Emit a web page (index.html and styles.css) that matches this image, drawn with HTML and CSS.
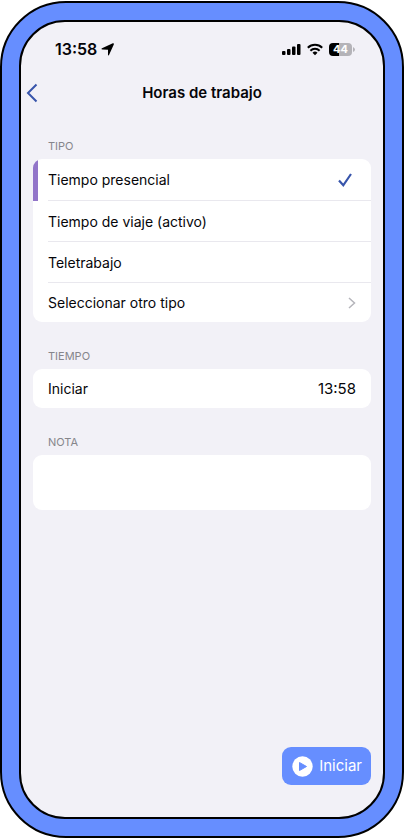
FILE: index.html
```html
<!DOCTYPE html>
<html lang="es">
<head>
<meta charset="utf-8">
<meta name="viewport" content="width=device-width, initial-scale=1">
<title>Horas de trabajo</title>
<link rel="stylesheet" href="styles.css">
</head>
<body>
<div class="device">
  <div class="screen">
    <div class="status">
      <div class="status-group clock">
        <span>13:58</span>
        <svg width="13" height="13" viewBox="0 0 13 13" aria-hidden="true"><path d="M12.800 1.400 8 12Q7.300 13.200 7 11.800V6.700L1.500 6.600Q-.5 6.300 1 5.200L11.800.3Q13.200 0 12.800 1.400Z"/></svg>
      </div>
      <div class="status-group">
        <svg width="19" height="13" viewBox="0 0 19 13" aria-hidden="true"><rect x="0" y="8" width="3.500" height="4" rx="1"/><rect x="5" y="6" width="3.500" height="6" rx="1"/><rect x="10" y="3.500" width="3.500" height="8.500" rx="1"/><rect x="15" y="1" width="3.500" height="11" rx="1"/></svg>
        <svg width="16" height="13" viewBox="0 0 16 13" aria-hidden="true"><g fill="none" stroke="#000" stroke-width="2"><path d="M.8 4.800a10.300 10.300 0 0 1 14.400 0"/><path d="M3.400 7.700a6.600 6.600 0 0 1 9.200 0"/></g><path d="M8 12.300 5.500 9.800a3.600 3.600 0 0 1 5 0Z"/></svg>
        <div class="battery"><span class="battery-level">44</span><svg width="2" height="5" viewBox="0 0 2 5" aria-hidden="true"><path fill="#b4b3b8" d="M0 0Q2 1 2 2.500T0 5Z"/></svg></div>
      </div>
    </div>

    <header class="nav">
      <button class="back" type="button" aria-label="Atrás">
        <svg width="12" height="20" viewBox="0 0 12 20" aria-hidden="true"><path d="M10.500 1.500 2 10l8.500 8.500" fill="none" stroke="#3855ab" stroke-width="2"/></svg>
      </button>
      <h1>Horas de trabajo</h1>
    </header>

    <main class="form">
      <section>
        <h2>TIPO</h2>
        <div class="card">
          <button class="row selected" type="button" aria-pressed="true"><span class="cell">Tiempo presencial
            <svg width="16" height="16" viewBox="0 0 16 16" aria-hidden="true"><path d="M2 8.500 6.300 13.300 14 2" fill="none" stroke="#3855ab" stroke-width="2.200"/></svg></span></button>
          <button class="row" type="button"><span class="cell">Tiempo de viaje (activo)</span></button>
          <button class="row" type="button"><span class="cell">Teletrabajo</span></button>
          <button class="row" type="button"><span class="cell">Seleccionar otro tipo
            <svg width="8" height="12" viewBox="0 0 8 12" aria-hidden="true"><path d="M1 1l5.500 5L1 11" fill="none" stroke="#b5b5bb" stroke-width="1.500"/></svg></span></button>
        </div>
      </section>
      <section>
        <h2>TIEMPO</h2>
        <div class="card">
          <button class="row" type="button"><span class="cell">Iniciar <time>13:58</time></span></button>
        </div>
      </section>
      <section>
        <h2><label for="note">NOTA</label></h2>
        <textarea class="card note" id="note"></textarea>
      </section>
    </main>

    <footer class="actions">
      <button class="start" type="button">
        <svg width="21" height="21" viewBox="0 0 21 21" aria-hidden="true"><circle cx="10.500" cy="10.500" r="10.200" fill="#fff"/><path d="M7.500 6.500v8l7-4z" fill="#668eff" stroke="#668eff" stroke-linejoin="round"/></svg>
        Iniciar
      </button>
    </footer>
  </div>
</div>
</body>
</html>
```
FILE: styles.css
```css
* {
  box-sizing: border-box;
}

body {
  margin: 0;
  background: #fff;
  color: #050509;
  font-family: Inter, "Liberation Sans", sans-serif;
  font-size: 15px;
  line-height: 20px;
}

button,
textarea {
  border: 0;
  padding: 0;
  background: none;
  color: inherit;
  font: inherit;
}

svg {
  display: block;
  flex: none;
}

.device {
  display: flex;
  min-height: calc(100vh - 2px);
  margin: 1px 0;
  padding: 17px;
  border: 2px solid #000;
  border-radius: 66px;
  background: #668eff;
}

.screen {
  display: flex;
  flex: 1;
  flex-direction: column;
  min-width: 0;
  border: 2px solid #000;
  border-radius: 46px;
  background: #f2f1f7;
}

.status {
  display: flex;
  justify-content: space-between;
  padding: 17px 28px 0 34px;
}

.status-group {
  display: flex;
  align-items: center;
  gap: 6px;
}

.clock {
  gap: 4px;
  font-size: 16px;
  font-weight: 600;
}

.battery {
  display: flex;
  align-items: center;
  gap: 1px;
}

.battery-level {
  width: 23px;
  border-radius: 4px;
  background: linear-gradient(90deg, #000 44%, #b4b3b8 44%);
  color: #fff;
  font-size: 11px;
  font-weight: 700;
  line-height: 13px;
  text-align: center;
}

.nav {
  display: grid;
  grid-template-columns: 32px 1fr 32px;
  align-items: center;
  margin-top: 24px;
}

.back {
  padding: 0 5px;
}

h1 {
  margin: 0;
  font-size: 15px;
  font-weight: 600;
  text-align: center;
}

.form {
  display: flex;
  flex: 1;
  flex-direction: column;
  gap: 26px;
  padding: 35px 12px 0;
}

h2 {
  margin: 0 0 5px;
  padding-left: 15px;
  color: #86868b;
  font-size: 11px;
  font-weight: 400;
  line-height: 16px;
}

.card {
  display: block;
  width: 100%;
  overflow: hidden;
  border-radius: 9px;
  background: #fff;
}

.row {
  display: block;
  width: 100%;
  padding-left: 15px;
  font-size: 14px;
  text-align: left;
}

.selected {
  padding-left: 10px;
  border-left: 5px solid #9275c9;
}

.cell {
  display: flex;
  align-items: center;
  justify-content: space-between;
  height: 41px;
  padding: 1px 15px 0 0;
  border-bottom: 1px solid #e9e8ee;
}

.selected .cell {
  height: 42px;
  padding-right: 18px;
}

.row:last-child .cell {
  height: 39px;
  border-bottom: 0;
}

time {
  font-size: 15px;
}

.note {
  height: 55px;
  resize: none;
  padding: 10px 15px;
}

.actions {
  display: flex;
  justify-content: flex-end;
  padding: 0 12px 32px;
}

.start {
  display: flex;
  align-items: center;
  gap: 6px;
  height: 38px;
  padding: 0 9px 0 10px;
  border-radius: 9px;
  background: #668eff;
  color: #fff;
}
```
